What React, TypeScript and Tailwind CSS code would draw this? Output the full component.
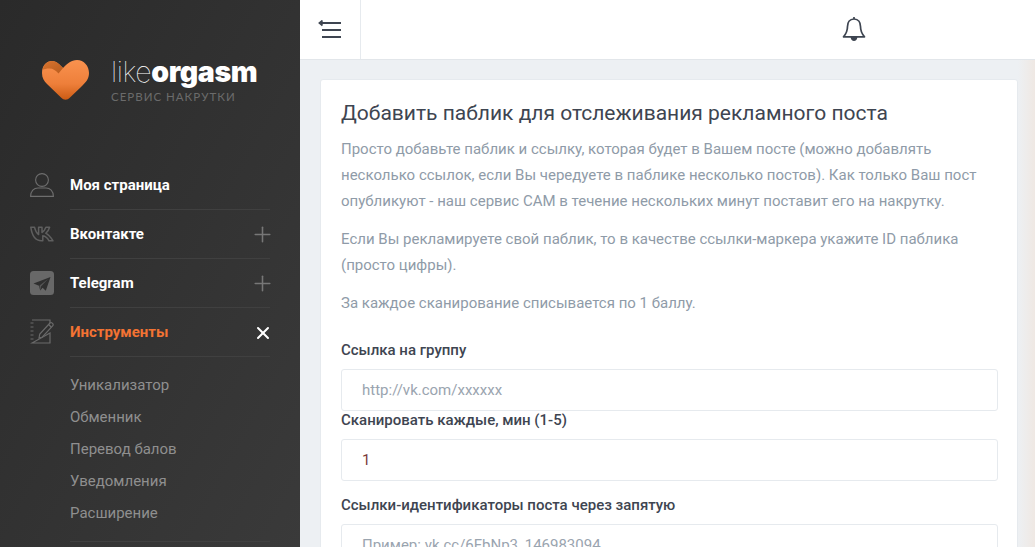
import { Plus, X } from "lucide-react";

const subItems = ["Уникализатор", "Обменник", "Перевод балов", "Уведомления", "Расширение"];

function HeartLogo() {
  return (
    <svg width="47" height="40" viewBox="0 0 47 40" className="shrink-0">
      <defs>
        <linearGradient id="heartMain" x1="0" y1="0" x2="0" y2="1">
          <stop offset="0" stopColor="#f9924f" />
          <stop offset="0.6" stopColor="#ee7f3a" />
          <stop offset="1" stopColor="#cb5b14" />
        </linearGradient>
        <linearGradient id="heartFold" x1="0" y1="0" x2="1" y2="1">
          <stop offset="0" stopColor="#d9742f" />
          <stop offset="1" stopColor="#b85c1e" />
        </linearGradient>
      </defs>
      <path
        d="M0 13 C0 5 5 1 10 1 C15 1 18 5 21 8 C25 4 29 0 35 0 C42 0 47 6 47 13 C47 19 44 22 39 27 L28 37.5 C25 40.5 22 40.5 19 37.5 L5 24 C2 21 0 18 0 13 Z"
        fill="url(#heartMain)"
      />
      <path d="M0.5 10 C1.5 4 6 1 10 1 C15 1 18 5 21 8 L16.5 13.5 C14 10.5 11 8.5 7.5 8.5 C4.5 8.5 2 9 0.5 10 Z" fill="url(#heartFold)" />
    </svg>
  );
}

function UserIcon() {
  return (
    <svg width="24" height="24" viewBox="0 0 24 24" fill="none" stroke="#6e6e6e" strokeWidth="1.1">
      <circle cx="12" cy="7" r="6.4" />
      <path d="M0.6 23.4 C0.6 18 4 15 8 15 H16 C20 15 23.4 18 23.4 23.4 Z" />
    </svg>
  );
}

function VkIcon() {
  return (
    <svg width="24" height="16" viewBox="0 0 24 16" fill="none" stroke="#5f5f5f" strokeWidth="1.5" strokeLinejoin="round">
      <path d="M0.8 1.2 H4.5 C5.5 5 7 7.5 8.6 8.5 V1.2 H12 V6.5 C13.5 5.8 15 3.5 15.9 1.2 H19.6 C19 3.5 17.2 6 15.8 7.2 C17.6 8.2 20.5 11 23 14.8 H19 C17.8 12.5 15.5 10.2 12.8 9.8 V14.8 H11.5 C6 14.8 2 10 0.8 1.2 Z" />
    </svg>
  );
}

function TelegramIcon() {
  return (
    <svg width="24" height="24" viewBox="0 0 24 24">
      <rect width="24" height="24" rx="3.5" fill="#686868" />
      <path d="M20.5 6 L3.5 12.6 L9 14.8 L10.2 19.5 L12.6 16.8 L15.8 19.8 Z" fill="#2f2f2f" />
      <path d="M18 8 L9.6 14.6 L10.2 19.5 L11 15.6 Z" fill="#555555" />
    </svg>
  );
}

function NotebookIcon() {
  return (
    <svg width="24" height="25" viewBox="0 0 24 25" fill="none" stroke="#6a6a6a" strokeWidth="1.2">
      <path d="M2 1 H20 V6 M20 14 V24 H2 Z" />
      <path d="M0.5 4 H3.5 M0.5 8 H3.5 M0.5 12 H3.5 M0.5 16 H3.5 M0.5 20 H3.5" />
      <path d="M9 19 L9.8 15 L20 4 C21 3 22.6 4 23 5 C23.4 6 23 6.6 22.4 7.2 L12.4 18 Z" fill="#2f2f2f" />
      <path d="M18.6 5.5 L21.4 8.2" />
    </svg>
  );
}

function MenuRow({ icon, label, active, mark }: { icon: React.ReactNode; label: string; active?: boolean; mark?: "plus" | "close" }) {
  return (
    <div className="flex h-[49px]">
      <div className="flex w-[70px] shrink-0 items-center pl-[30px] pb-[2px]">{icon}</div>
      <div className="flex flex-1 items-center justify-between border-b border-[#404040] pt-[1px]">
        <span className={`text-[15px] font-bold ${active ? "text-[#f37333]" : "text-white"}`}>{label}</span>
        {mark === "plus" && <Plus size={25} strokeWidth={1.5} className="-mr-[5px] text-[#777777]" />}
        {mark === "close" && <X size={20} strokeWidth={2.4} className="-mr-[3px] text-white" />}
      </div>
    </div>
  );
}

function Field({ label, placeholder, value, className }: { label: string; placeholder?: string; value?: string; className?: string }) {
  return (
    <div className={className}>
      <div className="text-[15px] leading-[20px] font-medium text-[#3e4551]">{label}</div>
      <div className="mt-[9px] flex h-[42px] items-center rounded-[3px] border border-[#e6eaee] bg-white px-[20px] text-[15px]">
        <span className={value ? "text-[#7a3c3c]" : "text-[#9aa4af]"}>{value || placeholder}</span>
      </div>
    </div>
  );
}

export default function App() {
  return (
    <div className="flex h-[547px] w-[1035px] overflow-hidden font-['Roboto',sans-serif]">
      <aside className="w-[300px] shrink-0 bg-gradient-to-br from-[#2a2a2a] to-[#3a3a3a] pr-[30px]">
        <div className="flex h-[161px] items-start pt-[60px] pl-[42px]">
          <HeartLogo />
          <div className="ml-[22px] -mt-[3px]">
            <div className="font-['Inter',sans-serif] text-[28.5px] leading-[30px] tracking-[-0.4px] text-white">
              <span className="font-thin">like</span>
              <span className="font-black">orgasm</span>
            </div>
            <div className="mt-[3px] font-['Lato',sans-serif] text-[11.5px] leading-[14px] tracking-[1px] text-[#6b6b6b]">СЕРВИС НАКРУТКИ</div>
          </div>
        </div>
        <MenuRow icon={<UserIcon />} label="Моя страница" />
        <MenuRow icon={<VkIcon />} label="Вконтакте" mark="plus" />
        <MenuRow icon={<TelegramIcon />} label="Telegram" mark="plus" />
        <MenuRow icon={<NotebookIcon />} label="Инструменты" active mark="close" />
        <div className="ml-[70px] border-b border-[#404040] pt-[12px] pb-[12px]">
          {subItems.map((s) => (
            <div key={s} className="h-[32px] text-[15px] leading-[32px] text-[#8f8f8f]">
              {s}
            </div>
          ))}
        </div>
      </aside>
      <main className="min-w-0 flex-1 bg-[#edf0f3]">
        <header className="flex h-[60px] items-center border-b border-[#e2e6ea] bg-white">
          <div className="flex h-full w-[61px] items-center justify-center border-r border-[#e6eaee]">
            <svg width="24" height="20" viewBox="0 0 24 20" fill="none" stroke="#3e4551">
              <path d="M3 3 H23 M4 10 H23 M4 17 H23" strokeWidth="2" />
              <path d="M4.5 0.5 L1.5 3 L4.5 5.5" strokeWidth="1.8" />
            </svg>
          </div>
          <div className="ml-[481px] pb-[1px]">
            <svg width="24" height="26" viewBox="0 0 24 26" fill="none" stroke="#3e4551" strokeWidth="1.7">
              <path d="M12 3 C7.5 3 5.5 6.5 5.5 10.5 C5.5 15.5 4 18 1.5 20.8 H22.5 C20 18 18.5 15.5 18.5 10.5 C18.5 6.5 16.5 3 12 3 Z" strokeLinejoin="round" />
              <path d="M12 3 V1" />
              <path d="M9.5 21.5 C10 25 14 25 14.5 21.5 Z" fill="#3e4551" />
            </svg>
          </div>
        </header>
        <div className="flex">
          <div className="min-w-0 flex-1 pt-[19px] pl-[20px]">
            <section className="h-[600px] rounded-[3px] border border-[#e6eaee] bg-white pt-[20px] pr-[19px] pl-[20px]">
              <h1 className="text-[21px] leading-[26px] font-normal text-[#3e4551]">Добавить паблик для отслеживания рекламного поста</h1>
              <div className="mt-[10px] text-[15px] leading-[26px] text-[#8f9ba8]">
                <p>
                  Просто добавьте паблик и ссылку, которая будет в Вашем посте (можно добавлять<br />
                  несколько ссылок, если Вы чередуете в паблике несколько постов). Как только Ваш пост<br />
                  опубликуют - наш сервис САМ в течение нескольких минут поставит его на накрутку.
                </p>
                <p className="mt-[12px]">Если Вы рекламируете свой паблик, то в качестве ссылки-маркера укажите ID паблика<br />(просто цифры).</p>
                <p className="mt-[12px]">За каждое сканирование списывается по 1 баллу.</p>
              </div>
              <Field className="mt-[24px]" label="Ссылка на группу" placeholder="http://vk.com/xxxxxx" />
              <Field className="-mt-[1px]" label="Сканировать каждые, мин (1-5)" value="1" />
              <Field className="mt-[14px]" label="Ссылки-идентификаторы поста через запятую" placeholder="Пример: vk.cc/6FbNp3, 146983094" />
            </section>
          </div>
          <div className="h-[487px] w-[17px] shrink-0 bg-gradient-to-r from-[#edf0f3] to-[#efe8e3]" />
        </div>
      </main>
    </div>
  );
}
